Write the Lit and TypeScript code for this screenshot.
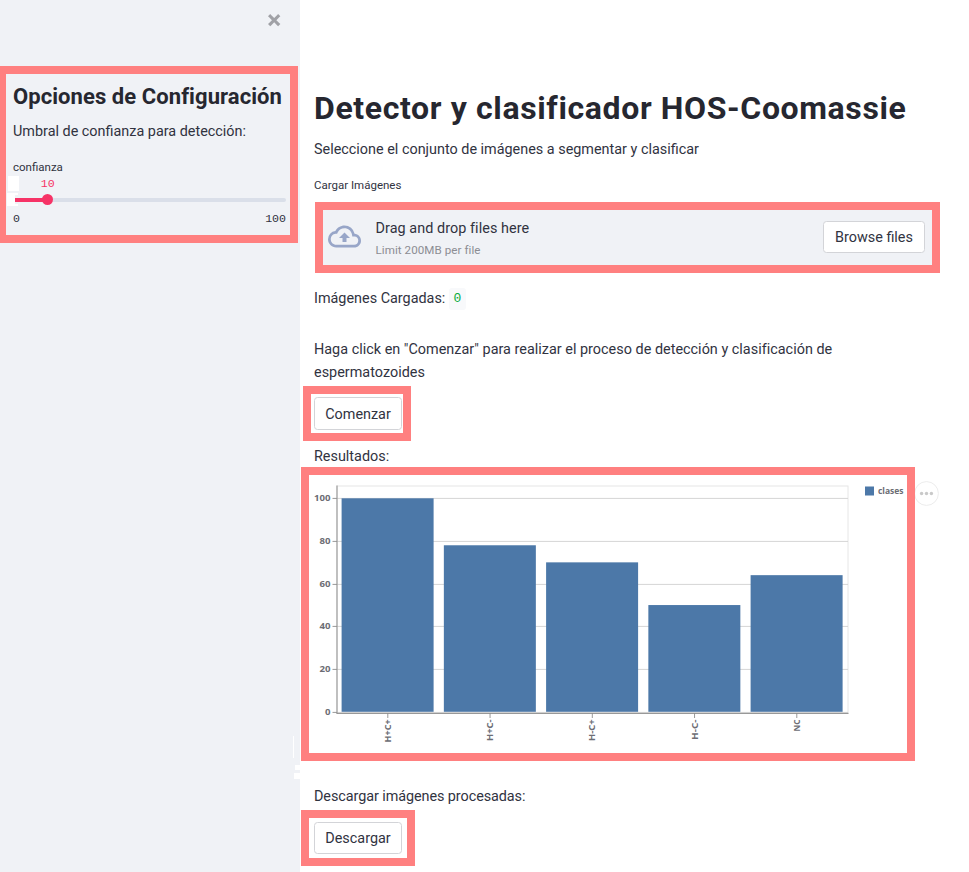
import { LitElement, html, svg, css } from "lit";
import { customElement, property } from "lit/decorators.js";

interface Bar {
  label: string;
  value: number;
  labelWidth: number;
}

const BARS: Bar[] = [
  { label: "H+C+", value: 100, labelWidth: 23 },
  { label: "H+C-", value: 78, labelWidth: 21.5 },
  { label: "H-C+", value: 70, labelWidth: 21.5 },
  { label: "H-C-", value: 50, labelWidth: 20.5 },
  { label: "NC", value: 64, labelWidth: 12 },
];

const TICKS = [0, 20, 40, 60, 80, 100];

@customElement("confidence-slider")
export class ConfidenceSlider extends LitElement {
  @property({ type: Number }) value = 10;
  @property({ type: Number }) max = 100;

  static styles = css`
    :host {
      display: block;
      font-family: "Liberation Mono", monospace;
      font-size: 11.6px;
    }
    .area {
      position: relative;
      height: 30px;
      width: 271px;
      margin-left: 2px;
    }
    .patch {
      position: absolute;
      background: #fff;
    }
    .upper {
      left: -7px;
      top: 0;
      width: 11px;
      height: 15px;
    }
    .lower {
      left: -8px;
      top: 17px;
      width: 11px;
      height: 13px;
    }
    .gap {
      position: absolute;
      left: 0;
      top: 19px;
      width: 3px;
      height: 9px;
      background: #f0f2f6;
    }
    .rail {
      position: absolute;
      left: 0;
      top: 22px;
      width: 100%;
      height: 4px;
      border-radius: 0 2px 2px 0;
      background: #dadfe9;
    }
    .fill {
      height: 4px;
      background: #f63366;
    }
    .thumb {
      position: absolute;
      top: 18px;
      width: 11px;
      height: 11px;
      margin-left: -5.5px;
      border-radius: 50%;
      background: #f63366;
    }
    .value {
      position: absolute;
      top: 0;
      line-height: 15px;
      transform: translateX(-50%);
      color: #f63366;
    }
    .limits {
      display: flex;
      justify-content: space-between;
      width: 273px;
      line-height: 16px;
      margin-top: 5px;
      color: #31333f;
    }
  `;

  render() {
    const x = 4 + (this.value / this.max) * 280;
    return html`
      <div class="area">
        <div class="patch upper"></div>
        <div class="patch lower"></div>
        <div class="gap"></div>
        <div class="rail"><div class="fill" style="width:${x}px"></div></div>
        <div class="thumb" style="left:${x}px"></div>
        <div class="value" style="left:${x + 0.8}px">${this.value}</div>
      </div>
      <div class="limits"><span>0</span><span>${this.max}</span></div>
    `;
  }
}

@customElement("class-chart")
export class ClassChart extends LitElement {
  static styles = css`
    :host {
      display: block;
    }
    svg {
      display: block;
    }
    text {
      font-family: "Open Sans", "Liberation Sans", sans-serif;
      font-weight: 700;
      font-size: 9px;
      fill: #6c6d74;
    }
    .grid {
      stroke: #d5d5d5;
    }
    .frame {
      fill: none;
      stroke: #e6e6e6;
    }
    .axis {
      stroke: #8d8d8d;
    }
    .tick {
      stroke: #999;
    }
    .bar {
      fill: #4c78a8;
    }
  `;

  private y(v: number) {
    return 244.8 - v * 2.135;
  }

  render() {
    return html`
      <svg width="614" height="294" viewBox="0 0 614 294">
        <rect class="frame" x="36" y="19" width="511" height="227"></rect>
        ${TICKS.map((t) => {
          const y = Math.round(this.y(t)) + 0.4;
          return svg`
            <line class="grid" x1="36" x2="547" y1=${y} y2=${y}></line>
            <line class="tick" x1="31.5" x2="36" y1=${y} y2=${y}></line>
            <text x="29.6" y=${y + 3} text-anchor="end"
              textLength=${String(t).length * 5.5}
              lengthAdjust="spacingAndGlyphs">${t}</text>`;
        })}
        ${BARS.map((b, i) => {
          const x = 40.6 + i * 102.25;
          const c = x + 46.2;
          const top = this.y(b.value);
          return svg`
            <rect class="bar" x=${x} y=${top} width="92" height=${244.8 - top}></rect>
            <line class="tick" x1=${c} x2=${c} y1="246" y2="251"></line>
            <text transform="translate(${c + 3} 252.4) rotate(-90)" text-anchor="end"
              textLength=${b.labelWidth} lengthAdjust="spacingAndGlyphs">${b.label}</text>`;
        })}
        <line class="axis" x1="36" x2="36" y1="18.5" y2="246.5"></line>
        <line class="axis" x1="35.5" x2="547.5" y1="246.4" y2="246.4"></line>
        <rect class="bar" x="564" y="19.5" width="9" height="9"></rect>
        <text x="577" y="26.6" textLength="25.5" lengthAdjust="spacingAndGlyphs">clases</text>
      </svg>
    `;
  }
}

@customElement("app-root")
export class AppRoot extends LitElement {
  static styles = css`
    :host {
      display: flex;
      height: 872px;
      overflow: hidden;
      background: #fff;
      color: #31333f;
      font-family: Roboto, "Liberation Sans", sans-serif;
      font-size: 14.4px;
      line-height: 22px;
    }
    * {
      box-sizing: border-box;
    }
    h1,
    h2,
    p {
      margin: 0;
    }
    h1,
    h2 {
      color: #262730;
    }
    .side {
      position: relative;
      flex: none;
      width: 300px;
      background: #f0f2f6;
    }
    .bar {
      display: flex;
      justify-content: flex-end;
      height: 66px;
      padding: 14px 19.4px 0 0;
    }
    .bar svg {
      width: 12.6px;
      height: 12.6px;
      fill: #a0a1a6;
    }
    .options {
      width: 298px;
      height: 177px;
      border: 8px solid #ff8080;
      border-left-width: 6px;
      padding: 9px 0 0 7px;
    }
    h2 {
      font-size: 22px;
      line-height: 28px;
      letter-spacing: 0.07px;
      white-space: nowrap;
    }
    .options p {
      margin-top: 10px;
    }
    .label {
      display: block;
      font-size: 11.5px;
      line-height: 18px;
    }
    .options .label {
      margin-top: 15px;
    }
    .speck {
      position: absolute;
      background: #fff;
    }
    .s1 {
      left: 293px;
      top: 736px;
      width: 1px;
      height: 22px;
    }
    .s2 {
      left: 295px;
      top: 765px;
      width: 5px;
      height: 5px;
    }
    .s3 {
      left: 294px;
      top: 773px;
      width: 6px;
      height: 6px;
    }
    main {
      flex: 1;
      padding: 88px 0 0 14px;
    }
    h1 {
      font-size: 32px;
      line-height: 40px;
      letter-spacing: 0.63px;
      white-space: nowrap;
    }
    .intro {
      margin-top: 11px;
    }
    main .label {
      margin-top: 15px;
    }
    .drop {
      display: flex;
      align-items: flex-start;
      width: 625px;
      height: 71px;
      margin: 8px 0 0 1px;
      padding: 0 7px 0 5px;
      border: 8px solid #ff8080;
      background: #f0f2f6;
    }
    .drop svg {
      width: 33px;
      height: 33px;
      margin: 10px 14.5px 0 0;
      fill: #98a6c8;
    }
    .hint {
      flex: 1;
      padding-top: 7.5px;
      letter-spacing: 0.06px;
    }
    .limit {
      font-size: 11.6px;
      line-height: 18px;
      margin-top: 1px;
      color: #8c8d93;
    }
    button {
      display: block;
      height: 33px;
      padding: 1px 0 0;
      border: 1px solid #d3d4d8;
      border-radius: 3.5px;
      background: #fff;
      color: inherit;
      font: inherit;
      line-height: 31px;
    }
    .browse {
      width: 102px;
      height: 32px;
      margin-top: 11px;
      line-height: 30px;
    }
    .count {
      display: flex;
      align-items: center;
      height: 22px;
      margin-top: 15px;
    }
    code {
      margin-left: 3.5px;
      width: 17px;
      height: 22px;
      border-radius: 3px;
      background: #f8f9fb;
      color: #09ab3b;
      font: 13px/22px "Liberation Mono", monospace;
      text-align: center;
    }
    .howto {
      width: 600px;
      margin-top: 28px;
      line-height: 23px;
      letter-spacing: 0.015px;
    }
    .mark {
      border: 8px solid #ff8080;
    }
    .mark button {
      width: 88px;
    }
    .start {
      width: 108px;
      height: 55px;
      margin: 2px 0 0 -11px;
      padding: 3px;
    }
    .results {
      margin-top: 5px;
    }
    .chart {
      position: relative;
      width: 614px;
      height: 294px;
      margin: -1px 0 0 -13px;
    }
    .chart class-chart {
      margin: -8px;
    }
    .more {
      position: absolute;
      left: 605px;
      top: 6px;
      width: 25px;
      height: 25px;
      z-index: -1;
    }
    .wrap {
      position: relative;
      z-index: 0;
    }
    .download {
      margin-top: 25px;
      letter-spacing: -0.07px;
    }
    .save {
      width: 114px;
      height: 56px;
      margin: 2px 0 0 -13px;
      padding: 4px 5px;
    }
    .save button {
      height: 32px;
      line-height: 30px;
    }
  `;

  render() {
    return html`
      <aside class="side">
        <div class="bar">
          <svg viewBox="0 0 8 8">
            <path
              d="M1.41 0l-1.41 1.41.72.72 1.78 1.81-1.78 1.78-.72.69 1.41 1.44.72-.72 1.81-1.81 1.78 1.81.69.72 1.44-1.44-.72-.69-1.81-1.78 1.81-1.81.72-.72-1.44-1.41-.69.72-1.78 1.78-1.81-1.78-.72-.72z"
            ></path>
          </svg>
        </div>
        <section class="options">
          <h2>Opciones de Configuración</h2>
          <p>Umbral de confianza para detección:</p>
          <span class="label">confianza</span>
          <confidence-slider value="10"></confidence-slider>
        </section>
        <div class="speck s1"></div>
        <div class="speck s2"></div>
        <div class="speck s3"></div>
      </aside>
      <main>
        <h1>Detector y clasificador HOS-Coomassie</h1>
        <p class="intro">Seleccione el conjunto de imágenes a segmentar y clasificar</p>
        <span class="label">Cargar Imágenes</span>
        <div class="drop">
          <svg viewBox="0 0 24 24">
            <path
              d="M19.35 10.04A7.49 7.49 0 0012 4C9.11 4 6.6 5.64 5.35 8.04A5.994 5.994 0 000 14c0 3.31 2.69 6 6 6h13c2.76 0 5-2.24 5-5 0-2.64-2.05-4.78-4.65-4.96zM19 18H6c-2.21 0-4-1.79-4-4 0-2.05 1.53-3.76 3.56-3.97l1.07-.11.5-.95A5.469 5.469 0 0112 6c2.62 0 4.88 1.86 5.39 4.43l.3 1.5 1.53.11A2.98 2.98 0 0122 15c0 1.65-1.35 3-3 3zM8 13h2.55v3h2.9v-3H16l-4-4z"
            ></path>
          </svg>
          <div class="hint">
            <div>Drag and drop files here</div>
            <div class="limit">Limit 200MB per file</div>
          </div>
          <button class="browse">Browse files</button>
        </div>
        <div class="count"><span>Imágenes Cargadas:</span><code>0</code></div>
        <p class="howto">
          Haga click en "Comenzar" para realizar el proceso de detección y clasificación de
          espermatozoides
        </p>
        <div class="mark start"><button>Comenzar</button></div>
        <p class="results">Resultados:</p>
        <div class="wrap">
          <div class="mark chart">
            <class-chart></class-chart>
            <svg class="more" viewBox="0 0 25 25">
              <circle cx="12.5" cy="12.5" r="11.9" fill="#fff" stroke="#ececec"></circle>
              <g fill="#c9c9c9">
                <circle cx="7.6" cy="12.5" r="1.7"></circle>
                <circle cx="12.5" cy="12.5" r="1.7"></circle>
                <circle cx="17.4" cy="12.5" r="1.7"></circle>
              </g>
            </svg>
          </div>
        </div>
        <p class="download">Descargar imágenes procesadas:</p>
        <div class="mark save"><button>Descargar</button></div>
      </main>
    `;
  }
}
